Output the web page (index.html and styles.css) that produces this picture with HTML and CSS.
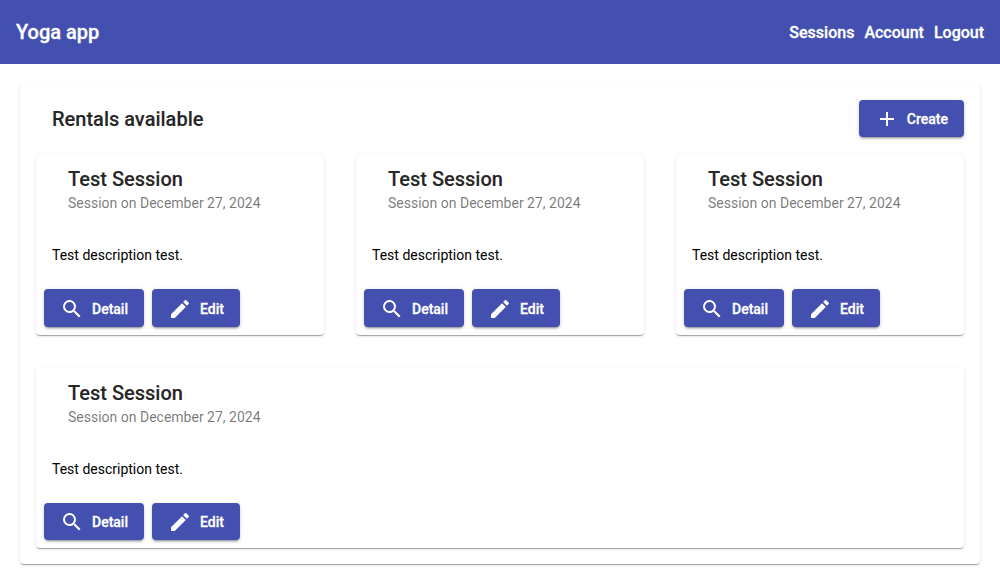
FILE: index.html
```html
<!DOCTYPE html>
<html lang="en">
<head>
<meta charset="utf-8">
<title>Yoga app</title>
<link rel="stylesheet" href="styles.css">
</head>
<body>
<svg width="0" height="0" class="defs">
  <symbol id="search" viewBox="0 0 24 24"><path d="M15.5 14h-.79l-.28-.27A6.471 6.471 0 0 0 16 9.5 6.5 6.5 0 1 0 9.5 16c1.61 0 3.09-.59 4.23-1.57l.27.28v.79l5 4.99L20.49 19l-4.99-5zm-6 0C7.01 14 5 11.99 5 9.5S7.01 5 9.5 5 14 7.01 14 9.5 11.99 14 9.5 14z"/></symbol>
  <symbol id="edit" viewBox="0 0 24 24"><path d="M3 17.25V21h3.75L17.81 9.94l-3.75-3.75L3 17.25zM20.71 7.04a.996.996 0 0 0 0-1.41l-2.34-2.34a.996.996 0 0 0-1.41 0l-1.83 1.83 3.75 3.75 1.83-1.83z"/></symbol>
  <symbol id="add" viewBox="0 0 24 24"><path d="M19 13h-6v6h-2v-6H5v-2h6V5h2v6h6v2z"/></symbol>
</svg>
<header class="toolbar">
  <h1 class="brand">Yoga app</h1>
  <nav class="links"><a>Sessions</a><a>Account</a><a>Logout</a></nav>
</header>
<main class="card list">
  <div class="list-header">
    <h2 class="title">Rentals available</h2>
    <button class="btn btn-create"><svg class="icon"><use href="#add"/></svg><span>Create</span></button>
  </div>
  <div class="items">
    <article class="card item">
      <div class="item-header"><h3 class="title">Test Session</h3><p class="subtitle">Session on December 27, 2024</p></div>
      <p class="description">Test description test.</p>
      <div class="actions"><button class="btn"><svg class="icon"><use href="#search"/></svg><span>Detail</span></button><button class="btn"><svg class="icon"><use href="#edit"/></svg><span>Edit</span></button></div>
    </article>
    <article class="card item">
      <div class="item-header"><h3 class="title">Test Session</h3><p class="subtitle">Session on December 27, 2024</p></div>
      <p class="description">Test description test.</p>
      <div class="actions"><button class="btn"><svg class="icon"><use href="#search"/></svg><span>Detail</span></button><button class="btn"><svg class="icon"><use href="#edit"/></svg><span>Edit</span></button></div>
    </article>
    <article class="card item">
      <div class="item-header"><h3 class="title">Test Session</h3><p class="subtitle">Session on December 27, 2024</p></div>
      <p class="description">Test description test.</p>
      <div class="actions"><button class="btn"><svg class="icon"><use href="#search"/></svg><span>Detail</span></button><button class="btn"><svg class="icon"><use href="#edit"/></svg><span>Edit</span></button></div>
    </article>
    <article class="card item">
      <div class="item-header"><h3 class="title">Test Session</h3><p class="subtitle">Session on December 27, 2024</p></div>
      <p class="description">Test description test.</p>
      <div class="actions"><button class="btn"><svg class="icon"><use href="#search"/></svg><span>Detail</span></button><button class="btn"><svg class="icon"><use href="#edit"/></svg><span>Edit</span></button></div>
    </article>
  </div>
</main>
</body>
</html>
```
FILE: styles.css
```css
* { box-sizing: border-box; }
body { margin: 0; background: #fff; color: rgba(0,0,0,.87); font-family: Roboto, "Liberation Sans", sans-serif; min-height: 581px; }
h1, h2, h3, p { margin: 0; }
.defs { display: none; }
.toolbar { display: flex; align-items: center; justify-content: space-between; height: 64px; padding: 0 16px; background: #4350af; color: #fff; }
.brand { font-size: 20px; font-weight: 500; line-height: 32px; -webkit-text-stroke: .3px; }
.links { display: flex; gap: 10px; padding-top: 2px; font-size: 16px; font-weight: 500; line-height: 24px; -webkit-text-stroke: .3px; }
.card { border-radius: 4px; background: #fff; box-shadow: 0 2px 1px -1px rgba(0,0,0,.2), 0 1px 1px 0 rgba(0,0,0,.14), 0 1px 3px 0 rgba(0,0,0,.12); }
.list { margin: 20px 20px 0; padding: 16px; }
.list-header { display: flex; align-items: flex-start; justify-content: space-between; padding-left: 16px; height: 53px; }
.title { font-size: 20px; font-weight: 500; line-height: 32px; -webkit-text-stroke: .15px; }
.list-header .title { padding-top: 3px; }
.items { display: flex; flex-wrap: wrap; gap: 32px; }
.item { flex: 1 1 288px; height: 181.5px; display: flex; flex-direction: column; }
.item-header { padding: 10px 32px 0; height: 92px; }
.subtitle { font-size: 14px; line-height: 22px; font-weight: 400; color: rgba(0,0,0,.54); margin-top: -3px; }
.description { padding: 0 16px; font-size: 14px; line-height: 20px; color: #000; }
.actions { display: flex; gap: 8px; padding: 0 8px 8px; margin-top: auto; }
.btn { display: flex; align-items: center; gap: 8px; height: 37.5px; border: 0; border-radius: 4px; padding: 1.5px 16px 0; background: #4350af; color: #fff; font: 500 14px/20px Roboto, "Liberation Sans", sans-serif; box-shadow: 0 3px 1px -2px rgba(0,0,0,.2), 0 2px 2px 0 rgba(0,0,0,.14), 0 1px 5px 0 rgba(0,0,0,.12); }
.btn span { -webkit-text-stroke: .3px; }
.btn-create { height: 37px; padding-top: 1px; }
.icon { width: 24px; height: 24px; fill: currentColor; }
```
